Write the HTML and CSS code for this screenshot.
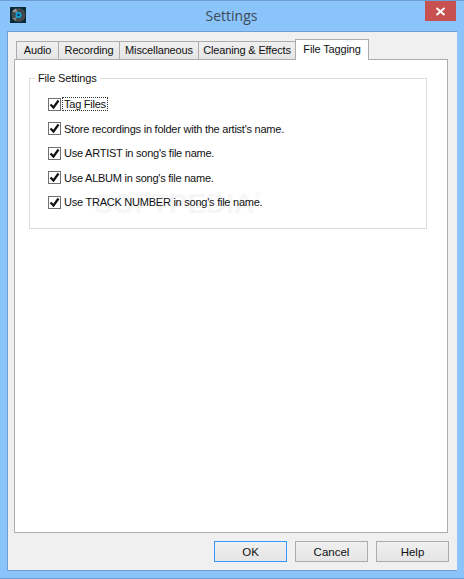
FILE: index.html
```html
<!DOCTYPE html>
<html lang="en">
<head>
    <meta charset="UTF-8">
    <title>Settings</title>
    <link rel="stylesheet" href="styles.css">
</head>
<body>

    <div class="window">
        <div class="titlebar">
            <svg class="app-icon" width="16" height="16" viewBox="0 0 16 16">
                <rect width="16" height="16" fill="#0a2a38"/>
                <circle cx="8.5" cy="8" r="7" fill="#43494c"/>
                <path d="M2 5a7 7 0 0 1 4-3.5l1.5 4z" fill="#8f9699"/>
                <path d="M2.5 11a7 7 0 0 0 3 3l1.5-4z" fill="#767d80"/>
                <circle cx="8.5" cy="8" r="3" fill="#0aa6dc"/>
                <circle cx="8.5" cy="8" r="1.2" fill="#06344a"/>
            </svg>
            <span class="title">Settings</span>
            <button class="close-btn">
                <svg width="11" height="9" viewBox="0 0 11 9">
                    <path d="M1.5 1l8 7M9.5 1l-8 7" stroke="#fff" stroke-width="2" fill="none"/>
                </svg>
            </button>
        </div>

        <div class="client">
            <div class="tabs">
                <div class="tab tab-audio">Audio</div>
                <div class="tab tab-recording">Recording</div>
                <div class="tab tab-misc">Miscellaneous</div>
                <div class="tab tab-cleaning">Cleaning &amp; Effects</div>
                <div class="tab active">File Tagging</div>
            </div>

            <div class="tab-pane">
                <fieldset class="group">
                    <legend>File Settings</legend>
                    <label class="check-row"><span class="check"><svg width="11" height="11" viewBox="0 0 11 11"><path d="M1.5 5.5l3 3 5-7" stroke="#111" stroke-width="2.2" fill="none"/></svg></span><span class="focus-label">Tag Files</span></label>
                    <label class="check-row"><span class="check"><svg width="11" height="11" viewBox="0 0 11 11"><path d="M1.5 5.5l3 3 5-7" stroke="#111" stroke-width="2.2" fill="none"/></svg></span><span>Store recordings in folder with the artist's name.</span></label>
                    <label class="check-row"><span class="check"><svg width="11" height="11" viewBox="0 0 11 11"><path d="M1.5 5.5l3 3 5-7" stroke="#111" stroke-width="2.2" fill="none"/></svg></span><span>Use ARTIST in song's file name.</span></label>
                    <label class="check-row"><span class="check"><svg width="11" height="11" viewBox="0 0 11 11"><path d="M1.5 5.5l3 3 5-7" stroke="#111" stroke-width="2.2" fill="none"/></svg></span><span>Use ALBUM in song's file name.</span></label>
                    <label class="check-row"><span class="check"><svg width="11" height="11" viewBox="0 0 11 11"><path d="M1.5 5.5l3 3 5-7" stroke="#111" stroke-width="2.2" fill="none"/></svg></span><span>Use TRACK NUMBER in song's file name.</span></label>
                    <div class="watermark">SOFTPEDIA<sup>®</sup></div>
                </fieldset>
            </div>

            <div class="form-actions">
                <button class="form-button primary">OK</button>
                <button class="form-button">Cancel</button>
                <button class="form-button">Help</button>
            </div>
        </div>
    </div>

</body>
</html>
```

FILE: styles.css
```css
:root {
    --frame-blue: #8ac4fa;
    --frame-edge: #6f9fd2;
    --client-bg: #f0f0f0;
    --border-gray: #acacac;
    --group-line: #dcdcdc;
    --text-dark: #111111;
}
*, *::before, *::after { box-sizing: border-box; }
body { margin: 0; font-family: "Liberation Sans", Arial, sans-serif; font-size: 11px; letter-spacing: -0.15px; color: var(--text-dark); background-color: var(--frame-blue); }

.window { width: 464px; height: 579px; display: flex; flex-direction: column; padding: 0 7px 7px 7px; background-color: var(--frame-blue); border: 1px solid var(--frame-edge); border-left-width: 0; border-right-width: 0; }
.titlebar { height: 30px; display: flex; align-items: flex-start; flex-shrink: 0; }
.app-icon { margin: 6px 0 0 3px; flex-shrink: 0; }
.title { flex-grow: 1; text-align: center; font-family: "Open Sans", sans-serif; font-size: 14px; letter-spacing: 0; line-height: 29px; color: #3d4a57; padding-left: 12px; }
.close-btn { width: 31px; height: 20px; padding: 0; margin-right: 1px; border: 0; background-color: #c75050; display: flex; align-items: center; justify-content: center; flex-shrink: 0; }

.client { flex-grow: 1; display: flex; flex-direction: column; background-color: var(--client-bg); border: 1px solid var(--frame-edge); border-right-width: 0; padding: 7px 8px 0 6px; }

.tabs { display: flex; height: 20px; padding-left: 2px; align-items: flex-end; flex-shrink: 0; position: relative; z-index: 1; }
.tab { height: 18px; line-height: 17px; text-align: center; background: linear-gradient(#f0f0f0, #e5e5e5); border: 1px solid var(--border-gray); border-bottom: 0; margin-right: -1px; }
.tab-audio { width: 43px; }
.tab-recording { width: 62px; }
.tab-misc { width: 80px; }
.tab-cleaning { width: 98px; }
.tab.active { width: 74px; height: 21px; line-height: 18px; background: #fff; margin-bottom: -1px; }

.tab-pane { flex-grow: 1; margin-right: 1px; background-color: #fff; border: 1px solid var(--border-gray); padding: 11px 20px 0 14px; }
.group { position: relative; z-index: 0; height: 158px; margin: 0; padding: 7px 0 0 18px; border: 1px solid var(--group-line); }
.group legend { padding: 0 3px; margin-left: -13px; line-height: 14px; }

.check-row { display: flex; align-items: center; gap: 3px; height: 24.5px; letter-spacing: -0.24px; }
.check { width: 13px; height: 13px; border: 1px solid #707070; background-color: #fff; display: flex; align-items: center; justify-content: center; flex-shrink: 0; }
.focus-label { outline: 1px dotted #333; padding: 0 1px; margin-left: -1px; }

.watermark { position: absolute; left: 64px; top: 103px; font-size: 28px; font-weight: 700; letter-spacing: 0; color: #f6f6f6; z-index: -1; }
.watermark sup { font-size: 9px; font-weight: 400; vertical-align: 14px; line-height: 0; }

.form-actions { display: flex; justify-content: flex-end; gap: 8px; padding-top: 8px; height: 37px; flex-shrink: 0; }
.form-button { width: 73px; height: 21px; padding: 0; font-family: inherit; font-size: 11.5px; color: var(--text-dark); background: linear-gradient(#f0f0f0, #e5e5e5); border: 1px solid var(--border-gray); }
.form-button.primary { border-color: #3399ff; }
```
